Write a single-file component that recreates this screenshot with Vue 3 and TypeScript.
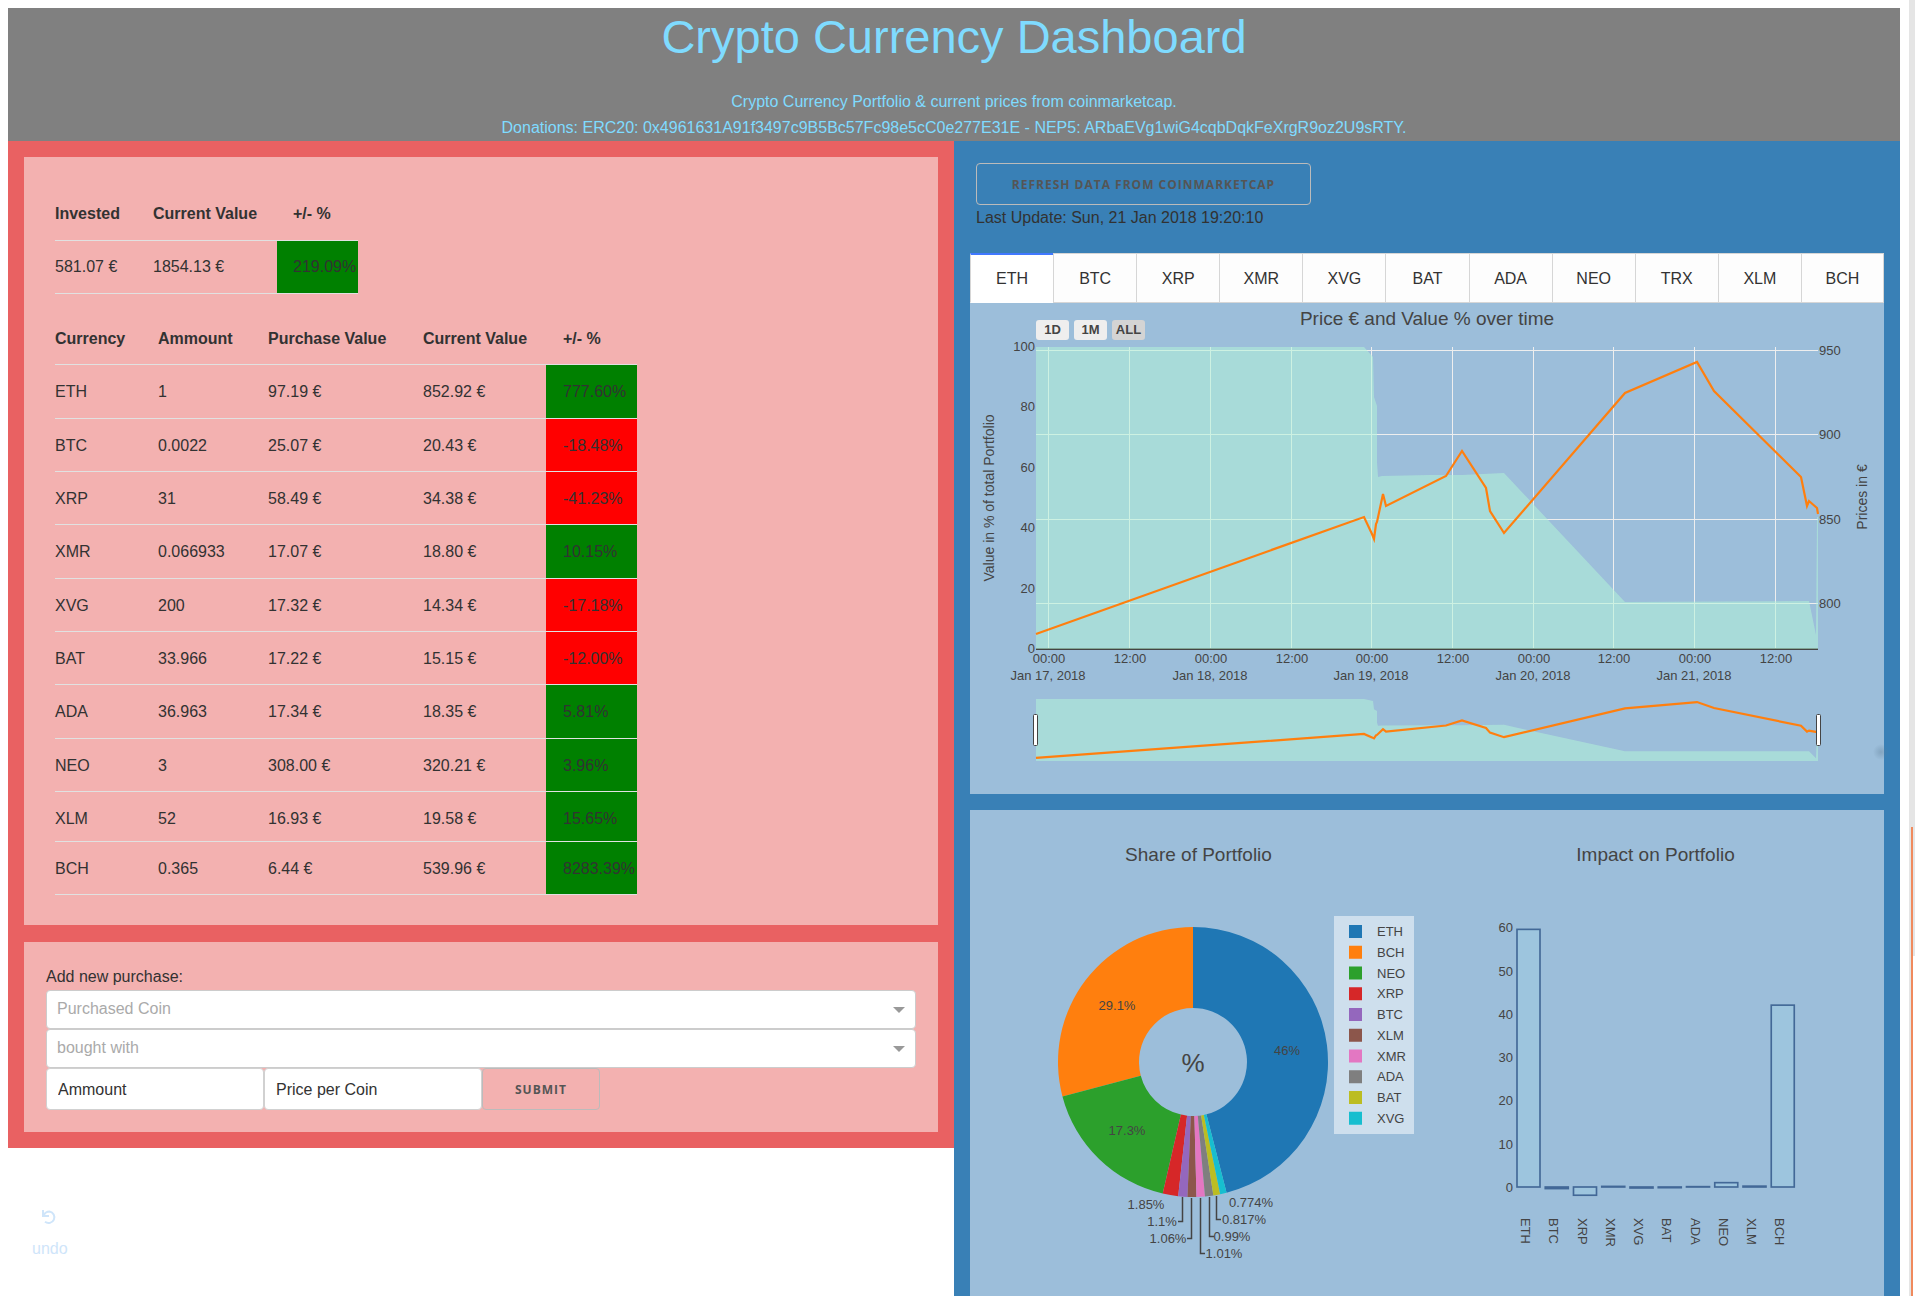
<script setup lang="ts">
import { ref } from 'vue'

type Point = [number, number]

const summary = { invested: '581.07 €', current: '1854.13 €', change: '219.09%' }

interface Holding {
  coin: string
  amount: string
  purchase: string
  current: string
  change: number
}

const holdings: Holding[] = [
  { coin: 'ETH', amount: '1', purchase: '97.19', current: '852.92', change: 777.6 },
  { coin: 'BTC', amount: '0.0022', purchase: '25.07', current: '20.43', change: -18.48 },
  { coin: 'XRP', amount: '31', purchase: '58.49', current: '34.38', change: -41.23 },
  { coin: 'XMR', amount: '0.066933', purchase: '17.07', current: '18.80', change: 10.15 },
  { coin: 'XVG', amount: '200', purchase: '17.32', current: '14.34', change: -17.18 },
  { coin: 'BAT', amount: '33.966', purchase: '17.22', current: '15.15', change: -12 },
  { coin: 'ADA', amount: '36.963', purchase: '17.34', current: '18.35', change: 5.81 },
  { coin: 'NEO', amount: '3', purchase: '308.00', current: '320.21', change: 3.96 },
  { coin: 'XLM', amount: '52', purchase: '16.93', current: '19.58', change: 15.65 },
  { coin: 'BCH', amount: '0.365', purchase: '6.44', current: '539.96', change: 8283.39 },
]

const tabs = ['ETH', 'BTC', 'XRP', 'XMR', 'XVG', 'BAT', 'ADA', 'NEO', 'TRX', 'XLM', 'BCH']
const activeTab = ref('ETH')
const ranges = ['1D', '1M', 'ALL']
const activeRange = ref('ALL')
const purchasedCoin = ref('')
const boughtWith = ref('')
const amount = ref('Ammount')
const price = ref('Price per Coin')

// Time chart
const plot = { left: 66, right: 848, top: 44, bottom: 346 }
const slider = { top: 396, bottom: 458 }

const sharePoints: Point[] = [
  [66, 44], [394, 44], [403, 54], [404, 94], [407, 103], [407, 159], [408, 174], [412, 173],
  [460, 172], [492, 172], [534, 170], [655, 299], [839, 298], [846, 332], [847, 214], [848, 214],
]
const pricePoints: Point[] = [
  [66, 331], [394, 214], [402, 231], [404, 236], [406, 221], [407, 219], [413, 191], [416, 203],
  [476, 173], [492, 148], [516, 185], [520, 208], [534, 230], [655, 90], [727, 59], [744, 88],
  [831, 174], [837, 203], [839, 198], [847, 205], [848, 211],
]

function toPolyline(points: Point[]): string {
  return points.map((p) => p.join(',')).join(' ')
}
function toSlider(points: Point[]): Point[] {
  const ratio = (slider.bottom - slider.top) / (plot.bottom - plot.top)
  return points.map(([x, y]) => [x, slider.top + (y - plot.top) * ratio])
}
function closeArea(points: Point[], bottom: number): string {
  return toPolyline([...points, [plot.right, bottom], [plot.left, bottom]])
}

const timeTicks = [
  { x: 78, time: '00:00', date: 'Jan 17, 2018' },
  { x: 159, time: '12:00' },
  { x: 240, time: '00:00', date: 'Jan 18, 2018' },
  { x: 321, time: '12:00' },
  { x: 401, time: '00:00', date: 'Jan 19, 2018' },
  { x: 482, time: '12:00' },
  { x: 563, time: '00:00', date: 'Jan 20, 2018' },
  { x: 643, time: '12:00' },
  { x: 724, time: '00:00', date: 'Jan 21, 2018' },
  { x: 805, time: '12:00' },
]
const shareTicks = [0, 20, 40, 60, 80, 100].map((value) => ({
  value,
  y: plot.bottom - (value / 100) * (plot.bottom - plot.top),
}))
const priceTicks = [
  { value: 950, y: 47 },
  { value: 900, y: 131 },
  { value: 850, y: 216 },
  { value: 800, y: 300 },
]

// Share of portfolio, largest first
const shares = [
  { coin: 'ETH', share: 46, color: '#1f77b4' },
  { coin: 'BCH', share: 29.1, color: '#ff7f0e' },
  { coin: 'NEO', share: 17.3, color: '#2ca02c' },
  { coin: 'XRP', share: 1.85, color: '#d62728' },
  { coin: 'BTC', share: 1.1, color: '#9467bd' },
  { coin: 'XLM', share: 1.06, color: '#8c564b' },
  { coin: 'XMR', share: 1.01, color: '#e377c2' },
  { coin: 'ADA', share: 0.99, color: '#7f7f7f' },
  { coin: 'BAT', share: 0.817, color: '#bcbd22' },
  { coin: 'XVG', share: 0.774, color: '#17becf' },
]

const pie = { cx: 223, cy: 252, outer: 135, inner: 54 }

function sector(from: number, to: number): string {
  const at = (r: number, t: number) => {
    const a = t * 2 * Math.PI
    return `${(pie.cx + r * Math.sin(a)).toFixed(2)} ${(pie.cy - r * Math.cos(a)).toFixed(2)}`
  }
  const large = Math.abs(to - from) > 0.5 ? 1 : 0
  return `M${at(pie.outer, from)}A${pie.outer} ${pie.outer} 0 ${large} 1 ${at(pie.outer, to)}L${at(pie.inner, to)}A${pie.inner} ${pie.inner} 0 ${large} 0 ${at(pie.inner, from)}Z`
}

const total = shares.reduce((sum, s) => sum + s.share, 0)
// The largest slice opens clockwise from twelve o'clock, the others close the ring backwards.
let edge = 1
const slices = shares.map((s, i) => {
  const part = s.share / total
  if (i === 0) return { ...s, path: sector(0, part) }
  const path = sector(edge - part, edge)
  edge -= part
  return { ...s, path }
})

const pieLabels = [
  { text: '46%', x: 317, y: 245 },
  { text: '29.1%', x: 147, y: 200 },
  { text: '17.3%', x: 157, y: 325 },
  { text: '1.85%', x: 176, y: 399 },
  { text: '1.1%', x: 192, y: 416 },
  { text: '1.06%', x: 198, y: 433 },
  { text: '1.01%', x: 254, y: 448 },
  { text: '0.99%', x: 262, y: 431 },
  { text: '0.817%', x: 274, y: 414 },
  { text: '0.774%', x: 281, y: 397 },
]
const leaders = [
  '212.5,387 212.5,411.5 208,411.5',
  '221.5,388 221.5,428.5 217,428.5',
  '230.5,388 230.5,443.5 235,443.5',
  '239.5,387 239.5,426.5 244,426.5',
  '246.5,386 246.5,409.5 251,409.5',
]

// Impact on portfolio
const impact = [
  { coin: 'ETH', value: 59.5 },
  { coin: 'BTC', value: -0.37 },
  { coin: 'XRP', value: -1.9 },
  { coin: 'XMR', value: 0.14 },
  { coin: 'XVG', value: -0.23 },
  { coin: 'BAT', value: -0.16 },
  { coin: 'ADA', value: 0.08 },
  { coin: 'NEO', value: 1 },
  { coin: 'XLM', value: 0.2 },
  { coin: 'BCH', value: 42 },
]
const zero = 377
const unit = 4.33
const bars = impact.map((b, i) => ({
  coin: b.coin,
  x: 90 + i * 28.25,
  y: b.value > 0 ? zero - b.value * unit : zero,
  height: Math.abs(b.value) * unit,
}))
const impactTicks = [0, 10, 20, 30, 40, 50, 60]
</script>

<template>
  <div class="page">
    <main class="dashboard">
      <header class="masthead">
        <h1>Crypto Currency Dashboard</h1>
        <p>Crypto Currency Portfolio &amp; current prices from coinmarketcap.</p>
        <p>Donations: ERC20: 0x4961631A91f3497c9B5Bc57Fc98e5cC0e277E31E - NEP5: ARbaEVg1wiG4cqbDqkFeXrgR9oz2U9sRTY.</p>
      </header>

      <div class="columns">
        <div class="left">
          <div class="portfolio">
            <section class="card tables">
              <table class="summary">
                <thead>
                  <tr><th>Invested</th><th>Current Value</th><th>+/- %</th></tr>
                </thead>
                <tbody>
                  <tr>
                    <td>{{ summary.invested }}</td>
                    <td>{{ summary.current }}</td>
                    <td class="gain">{{ summary.change }}</td>
                  </tr>
                </tbody>
              </table>
              <table class="holdings">
                <thead>
                  <tr><th>Currency</th><th>Ammount</th><th>Purchase Value</th><th>Current Value</th><th>+/- %</th></tr>
                </thead>
                <tbody>
                  <tr v-for="h in holdings" :key="h.coin">
                    <td>{{ h.coin }}</td>
                    <td>{{ h.amount }}</td>
                    <td>{{ h.purchase }} €</td>
                    <td>{{ h.current }} €</td>
                    <td :class="h.change < 0 ? 'loss' : 'gain'">{{ h.change.toFixed(2) }}%</td>
                  </tr>
                </tbody>
              </table>
            </section>

            <form class="card purchase" @submit.prevent>
              <label for="coin">Add new purchase:</label>
              <div class="dropdown">
                <select id="coin" v-model="purchasedCoin">
                  <option value="" disabled>Purchased Coin</option>
                  <option v-for="t in tabs" :key="t">{{ t }}</option>
                </select>
              </div>
              <div class="dropdown">
                <select v-model="boughtWith" aria-label="bought with">
                  <option value="" disabled>bought with</option>
                  <option>EUR</option>
                  <option v-for="t in tabs" :key="t">{{ t }}</option>
                </select>
              </div>
              <div class="fields">
                <input v-model="amount" type="text" aria-label="Ammount" />
                <input v-model="price" type="text" aria-label="Price per Coin" />
                <button class="outline" type="submit">Submit</button>
              </div>
            </form>
          </div>

          <button class="undo" type="button">
            <svg viewBox="0 0 16 16" width="16" height="16" aria-hidden="true">
              <path d="M1 1v6h6M1.500 6.500C3 3.500 5 2.500 7.500 2.500A5.800 5.800 0 1 1 3 12.800" />
            </svg>
            <span>undo</span>
          </button>
        </div>

        <div class="right">
          <div class="refresh">
            <button class="outline wide" type="button">Refresh data from coinmarketcap</button>
            <p>Last Update: Sun, 21 Jan 2018 19:20:10</p>
          </div>

          <div class="tabs" role="tablist">
            <button
              v-for="t in tabs"
              :key="t"
              type="button"
              role="tab"
              :aria-selected="t === activeTab"
              :class="{ selected: t === activeTab }"
              @click="activeTab = t"
            >{{ t }}</button>
          </div>

          <section class="chart">
            <div class="chart-head">
              <div class="ranges">
                <button
                  v-for="r in ranges"
                  :key="r"
                  type="button"
                  :class="{ active: r === activeRange }"
                  @click="activeRange = r"
                >{{ r }}</button>
              </div>
              <h2>Price € and Value % over time</h2>
            </div>
            <svg class="drawing" viewBox="0 41 914 450">
              <defs>
                <radialGradient id="smudge">
                  <stop offset="0" stop-color="#5f7f99" stop-opacity="0.4" />
                  <stop offset="1" stop-color="#5f7f99" stop-opacity="0" />
                </radialGradient>
              </defs>
              <g class="grid">
                <rect v-for="t in timeTicks" :key="t.x" :x="t.x" :y="plot.top" width="1" :height="plot.bottom - plot.top" />
                <rect v-for="t in priceTicks" :key="t.value" :x="plot.left" :y="t.y" :width="plot.right - plot.left" height="1" />
              </g>
              <rect class="zero" :x="plot.left" y="345" :width="plot.right - plot.left" height="2" />
              <polygon class="area" :points="closeArea(sharePoints, plot.bottom)" />
              <polyline class="price" :points="toPolyline(pricePoints)" />
              <g text-anchor="end">
                <text v-for="t in shareTicks" :key="t.value" x="65" :y="t.y + 4">{{ t.value }}</text>
              </g>
              <text v-for="t in priceTicks" :key="t.value" x="849" :y="t.y + 5">{{ t.value }}</text>
              <g text-anchor="middle">
                <template v-for="t in timeTicks" :key="t.x">
                  <text :x="t.x + 1" y="360">{{ t.time }}</text>
                  <text v-if="t.date" :x="t.x" y="377">{{ t.date }}</text>
                </template>
                <text class="axis" transform="translate(24 195) rotate(-90)">Value in % of total Portfolio</text>
                <text class="axis" transform="translate(897 194) rotate(-90)">Prices in €</text>
              </g>
              <polygon class="area" :points="closeArea(toSlider(sharePoints), slider.bottom)" />
              <polyline class="price" :points="toPolyline(toSlider(pricePoints))" />
              <rect class="handle" x="63.500" y="411.500" width="4" height="31" rx="1" />
              <rect class="handle" x="846.500" y="411.500" width="4" height="31" rx="1" />
              <circle cx="911" cy="449" r="8" fill="url(#smudge)" />
            </svg>
          </section>

          <section class="chart pair">
            <figure>
              <figcaption>Share of Portfolio</figcaption>
              <svg class="drawing" viewBox="0 70 457 416">
                <path v-for="s in slices" :key="s.coin" :d="s.path" :fill="s.color" />
                <polyline v-for="l in leaders" :key="l" class="leader" :points="l" />
                <g text-anchor="middle">
                  <text v-for="l in pieLabels" :key="l.text" :x="l.x" :y="l.y">{{ l.text }}</text>
                  <text class="hole" :x="pie.cx" y="262">%</text>
                </g>
                <rect class="legend" x="364" y="106" width="80" height="218" />
                <template v-for="(s, i) in shares" :key="s.coin">
                  <rect x="379" :y="115 + i * 20.75" width="13" height="13" :fill="s.color" />
                  <text x="407" :y="126 + i * 20.75">{{ s.coin }}</text>
                </template>
              </svg>
            </figure>
            <figure>
              <figcaption>Impact on Portfolio</figcaption>
              <svg class="drawing" viewBox="0 70 457 416">
                <g text-anchor="end">
                  <text v-for="t in impactTicks" :key="t" x="86" :y="zero + 5 - t * unit">{{ t }}</text>
                </g>
                <g class="bars">
                  <rect v-for="b in bars" :key="b.coin" :x="b.x" :y="b.y" width="23" :height="b.height" />
                </g>
                <text
                  v-for="b in bars"
                  :key="b.coin"
                  :transform="`translate(${b.x + 4} 408) rotate(90)`"
                >{{ b.coin }}</text>
              </svg>
            </figure>
          </section>
        </div>
      </div>
    </main>
    <div class="edge" aria-hidden="true"><span class="track"></span><span class="marker"></span></div>
  </div>
</template>

<style>
body {
  margin: 0;
  background: #fff;
}
</style>

<style scoped>
.page {
  display: flex;
  min-height: 100vh;
  box-sizing: border-box;
  font: 16px/26px "Liberation Sans", Arial, sans-serif;
  color: #323232;
}
.page * {
  box-sizing: border-box;
}
.dashboard {
  flex: 1;
  min-width: 0;
  display: flex;
  flex-direction: column;
  padding: 8px 9px 0 8px;
}
h1,
h2,
p,
figure {
  margin: 0;
  font-weight: 400;
}
button,
input,
select {
  font: inherit;
  color: inherit;
  margin: 0;
}
.masthead {
  background: #808080;
  color: #7fdbff;
  text-align: center;
}
.masthead h1 {
  font-size: 47px;
  line-height: 58px;
  margin-bottom: 23px;
}
.columns {
  flex: 1;
  display: grid;
  grid-template-columns: 1fr 1fr;
}
.left,
.right {
  min-width: 0;
}
.portfolio {
  background: #e96162;
  padding: 16px;
  display: flex;
  flex-direction: column;
  gap: 17px;
}
.card {
  background: #f3b1b0;
}
.tables {
  padding: 30px 31px;
}
table {
  border-collapse: collapse;
  table-layout: fixed;
}
.summary {
  width: 303px;
  margin-bottom: 20px;
}
.holdings {
  width: 582px;
}
th,
td {
  height: 53px;
  padding: 1px 0 0 16px;
  text-align: left;
  white-space: nowrap;
  border-bottom: 1px solid #e1e1e1;
}
th:first-child,
td:first-child {
  padding-left: 0;
}
.summary th:nth-child(1) {
  width: 82px;
}
.summary th:nth-child(2) {
  width: 140px;
}
.holdings th {
  height: 51px;
}
.holdings th:nth-child(1) {
  width: 87px;
}
.holdings th:nth-child(2) {
  width: 110px;
}
.holdings th:nth-child(3) {
  width: 155px;
}
.holdings th:nth-child(4) {
  width: 139px;
}
.holdings th:last-child,
.holdings td:last-child {
  padding-left: 17px;
}
.holdings tbody tr:nth-child(3n + 1) td {
  height: 54px;
}
.holdings tbody tr:nth-child(9) td {
  height: 50px;
  padding-top: 4px;
}
.holdings tbody tr:last-child td {
  height: 53px;
}
.gain {
  background: #008000;
}
.loss {
  background: #f00;
}
.purchase {
  padding: 22px;
}
.purchase label {
  display: block;
}
.dropdown {
  position: relative;
}
.dropdown::after {
  content: "";
  position: absolute;
  right: 11px;
  top: 17px;
  border: 6px solid transparent;
  border-top-color: #999;
  border-bottom-width: 0;
  pointer-events: none;
}
.dropdown select {
  appearance: none;
  display: block;
  width: 100%;
  height: 39px;
  padding: 0 10px 2px;
  border: 1px solid #ccc;
  border-radius: 4px;
  background: #fff;
  color: #aaa;
}
.fields {
  display: flex;
}
.fields input {
  width: 218px;
  height: 42px;
  padding: 2px 11px 0;
  border: 1px solid #d1d1d1;
  border-radius: 4px;
  background: #fff;
}
.outline {
  height: 42px;
  padding: 2px 32px 0;
  border: 1px solid #bbb;
  border-radius: 4px;
  background: transparent;
  color: #555;
  font: 700 12px/38px "Open Sans", sans-serif;
  letter-spacing: 1px;
  text-transform: uppercase;
}
.undo {
  display: flex;
  flex-direction: column;
  align-items: center;
  gap: 11px;
  margin: 61px 0 0 24px;
  padding: 0;
  border: 0;
  background: none;
  color: #cfe5fa;
}
.undo path {
  fill: none;
  stroke: currentColor;
  stroke-width: 2;
}
.right {
  background: #3980b6;
  display: flex;
  flex-direction: column;
  padding: 22px 16px 0;
}
.refresh {
  padding: 0 6px;
  margin-bottom: 22px;
}
.refresh .outline {
  display: block;
  width: 335px;
}
.tabs {
  display: grid;
  grid-template-columns: repeat(11, 1fr);
  height: 50px;
}
.tabs button {
  padding: 1px 0 0;
  border: solid #d6d6d6;
  border-width: 1px 0 1px 1px;
  background: #fdfdfd;
}
.tabs button:last-child {
  border-right-width: 1px;
}
.tabs .selected {
  padding: 0;
  background: #fff;
  border-top: 2px solid #4078ff;
  border-bottom-color: #fff;
}
.chart {
  background: #9cbeda;
  color: #444;
}
.chart h2,
.chart figcaption {
  font-size: 19px;
  line-height: 32px;
}
.chart-head {
  display: grid;
  grid-template-columns: 1fr auto 1fr;
  height: 41px;
}
.ranges {
  display: flex;
  gap: 5px;
  align-items: end;
  padding: 0 0 4px 66px;
}
.ranges button {
  width: 33px;
  height: 20px;
  padding: 0;
  border: 0;
  border-radius: 3px;
  background: #eee;
  font-size: 13px;
  font-weight: 700;
  line-height: 18px;
}
.ranges .active {
  background: #d4d4d4;
}
.drawing {
  display: block;
  width: 100%;
  height: auto;
  overflow: visible;
}
.drawing text {
  fill: #444;
  font-size: 13px;
}
.drawing .axis {
  font-size: 14px;
}
.drawing .hole {
  font-size: 26px;
}
.grid {
  fill: #eee;
}
.zero {
  fill: #444;
}
.area {
  fill: rgba(179, 242, 215, 0.56);
}
.price {
  fill: none;
  stroke: #ff7f0e;
  stroke-width: 2.2;
}
.handle {
  fill: #fff;
  stroke: #444;
}
.pair {
  flex: 1;
  display: flex;
  margin-top: 16px;
}
.pair figure {
  flex: 1;
}
.pair figcaption {
  padding: 29px 0 9px;
  text-align: center;
}
.leader {
  fill: none;
  stroke: #444;
  stroke-width: 1.5;
}
.legend {
  fill: #fff;
  fill-opacity: 0.5;
}
.bars rect {
  fill: #9ecae1;
  stroke: #08306b;
  stroke-width: 1.65;
  opacity: 0.6;
}
.edge {
  display: grid;
  grid-template-columns: 2px 4px;
  background: linear-gradient(90deg, #e5e5e5 2px, transparent 2px);
  width: 6px;
}
.track {
  grid-column: 2;
  grid-row: 1;
  height: 956px;
  background: #e5e5e5;
}
.marker {
  grid-column: 2;
  grid-row: 1;
  width: 2px;
  margin-top: 827px;
  background: #f08a5d;
}
</style>
